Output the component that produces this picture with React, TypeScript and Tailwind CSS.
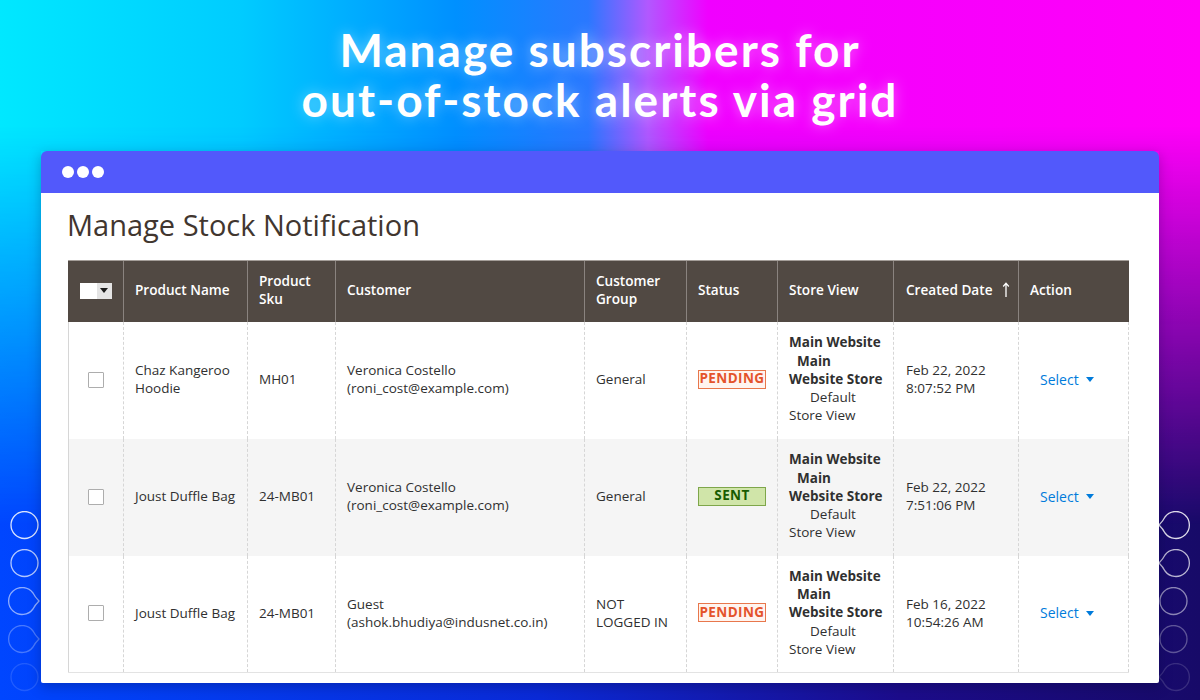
import React from "react";

const GRID =
  "grid grid-cols-[55px_124px_88px_249px_102px_91px_116px_125px_111px]";

function Circle({ op, tear }: { op: number; tear?: "left" | "right" }) {
  let path = "";
  if (tear === "right") {
    path = "M 26 6 A 13.5 13.5 0 1 0 26 22 Q 28 18 32 14 Q 28 10 26 6 Z";
  } else if (tear === "left") {
    path = "M 9 6 A 13.5 13.5 0 1 1 9 22 Q 7 18 3 14 Q 7 10 9 6 Z";
  }
  return (
    <svg width="35" height="29" viewBox="0 0 35 29" style={{ opacity: op }}>
      {tear ? (
        <path d={path} fill="none" stroke="white" strokeWidth="1.3" />
      ) : (
        <circle
          cx="17.5"
          cy="14"
          r="13.5"
          fill="none"
          stroke="white"
          strokeWidth="1.3"
        />
      )}
    </svg>
  );
}

function Badge({ kind }: { kind: "pending" | "sent" }) {
  if (kind === "pending")
    return (
      <div className="w-[70px] h-[19px] flex items-center justify-center border border-[#e8774c] bg-[#fff4ef] text-[#e4532b] font-bold text-[13.5px] tracking-[0.4px] leading-none">
        PENDING
      </div>
    );
  return (
    <div className="w-[70px] h-[19px] flex items-center justify-center border border-[#7ea64a] bg-[#d0e5a9] text-[#185b00] font-bold text-[13.5px] tracking-[0.4px] leading-none">
      SENT
    </div>
  );
}

function Select() {
  return (
    <div className="flex items-center text-[#007bdb] text-[14px]">
      <span>Select</span>
      <svg width="8" height="5" viewBox="0 0 8 5" className="ml-[7px] shrink-0">
        <path d="M0 0 H8 L4 5 Z" fill="#007bdb" />
      </svg>
    </div>
  );
}

type Row = {
  name: string[];
  sku: string;
  cust: string[];
  group: string[];
  status: "pending" | "sent";
  date: string[];
};

const rows: Row[] = [
  {
    name: ["Chaz Kangeroo", "Hoodie"],
    sku: "MH01",
    cust: ["Veronica Costello", "(roni_cost@example.com)"],
    group: ["General"],
    status: "pending",
    date: ["Feb 22, 2022", "8:07:52 PM"],
  },
  {
    name: ["Joust Duffle Bag"],
    sku: "24-MB01",
    cust: ["Veronica Costello", "(roni_cost@example.com)"],
    group: ["General"],
    status: "sent",
    date: ["Feb 22, 2022", "7:51:06 PM"],
  },
  {
    name: ["Joust Duffle Bag"],
    sku: "24-MB01",
    cust: ["Guest", "(ashok.bhudiya@indusnet.co.in)"],
    group: ["NOT", "LOGGED IN"],
    status: "pending",
    date: ["Feb 16, 2022", "10:54:26 AM"],
  },
];

const cell =
  "flex items-center px-[11px] pb-[3px] border-l border-dashed border-[#d6d6d6]";

function Lines({ lines }: { lines: string[] }) {
  return (
    <div className="flex flex-col whitespace-nowrap">
      {lines.map((l, i) => (
        <span key={i}>{l}</span>
      ))}
    </div>
  );
}

function StoreView() {
  return (
    <div className="flex flex-col whitespace-nowrap leading-[18.3px]">
      <span className="font-bold">Main Website</span>
      <span className="font-bold pl-[8px]">Main</span>
      <span className="font-bold">Website Store</span>
      <span className="pl-[21px]">Default</span>
      <span>Store View</span>
    </div>
  );
}

export default function App() {
  const hcell =
    "flex items-center px-[11px] pb-[4px] border-l border-[#8a837f] text-white font-semibold text-[13.6px] leading-[18px] whitespace-nowrap";
  return (
    <div className="relative w-[1200px] h-[700px] overflow-hidden font-['Open_Sans',sans-serif]">
      {/* background */}
      <div className="absolute inset-0 bg-[linear-gradient(to_right,#0046ff_0%,#0a2ad8_45%,#1c0c8c_75%,#170a68_100%)]" />
      <div className="absolute inset-0 bg-[linear-gradient(to_right,#00e8ff_0%,#00ccff_20%,#0090ff_38%,#2a78ff_49%,#b258ff_54%,#f000ff_59%,#ff00f8_100%)] [mask-image:linear-gradient(to_bottom,black_0%,black_18%,transparent_75%)]" />

      {/* decorative circles */}
      <div className="absolute left-[7px] top-[511px] flex flex-col gap-[9px]">
        <Circle op={0.85} />
        <Circle op={0.7} />
        <Circle op={0.55} tear="right" />
        <Circle op={0.28} tear="right" />
        <Circle op={0.12} />
      </div>
      <div className="absolute left-[1156px] top-[511px] flex flex-col gap-[9px]">
        <Circle op={0.85} tear="left" />
        <Circle op={0.7} tear="left" />
        <Circle op={0.5} />
        <Circle op={0.3} />
        <Circle op={0.14} tear="left" />
      </div>

      <div className="relative flex flex-col">
        {/* Title */}
        <div className="pt-[25px] text-center text-white font-['Lato',sans-serif] font-bold text-[46px] leading-[50px] tracking-[2px] [text-shadow:0_0_14px_rgba(255,255,255,0.45)]">
          <div>Manage subscribers for</div>
          <div>out-of-stock alerts via grid</div>
        </div>

        {/* Window */}
        <div className="ml-[41px] mt-[26px] w-[1118px] flex flex-col shadow-[0_4px_12px_rgba(0,0,40,0.25)]">
          <div className="h-[42px] bg-[#5259fb] rounded-t-[6px] flex items-center pl-[21px] gap-[3px]">
            <div className="w-[12px] h-[12px] rounded-full bg-white" />
            <div className="w-[12px] h-[12px] rounded-full bg-white" />
            <div className="w-[12px] h-[12px] rounded-full bg-white" />
          </div>
          <div className="bg-white pt-[14px] pb-[10px] pl-[27px] pr-[30px] rounded-b-[2px]">
            <div className="text-[29px] leading-[36px] text-[#41362f] -ml-[1px]">
              Manage Stock Notification
            </div>
            <div className="mt-[17px] w-[1061px] text-[#303030] text-[13.5px] leading-[18px]">
              {/* header */}
              <div
                className={`${GRID} h-[62px] bg-[#514943] border-t border-[#a49e99]`}
              >
                <div className="flex items-center justify-center pb-[2px]">
                  <div className="flex h-[16px]">
                    <div className="w-[17px] h-[16px] bg-white" />
                    <div className="w-[15px] h-[16px] bg-[#e4e4e4] flex items-center justify-center">
                      <svg width="8" height="5" viewBox="0 0 8 5">
                        <path d="M0 0 H8 L4 5 Z" fill="#1a1a1a" />
                      </svg>
                    </div>
                  </div>
                </div>
                <div className={hcell}>Product Name</div>
                <div className={hcell}>
                  <div>
                    Product
                    <br />
                    Sku
                  </div>
                </div>
                <div className={hcell}>Customer</div>
                <div className={hcell}>
                  <div>
                    Customer
                    <br />
                    Group
                  </div>
                </div>
                <div className={hcell}>Status</div>
                <div className={hcell}>Store View</div>
                <div className={`${hcell} pl-[12px] pr-0`}>
                  <span>Created Date</span>
                  <svg
                    width="8"
                    height="16"
                    viewBox="0 0 8 16"
                    className="ml-[10px] shrink-0"
                  >
                    <path
                      d="M4 15 V1.5 M1.2 4.5 L4 1.2 L6.8 4.5"
                      fill="none"
                      stroke="white"
                      strokeWidth="1.3"
                    />
                  </svg>
                </div>
                <div className={hcell}>Action</div>
              </div>
              {/* rows */}
              {rows.map((r, i) => (
                <div
                  key={i}
                  className={`${GRID} h-[117px] ${
                    i === 1 ? "bg-[#f5f5f5]" : "bg-white"
                  } ${i === 2 ? "border-b border-[#e3e3e3]" : ""}`}
                >
                  <div className="flex items-center justify-center pb-[2px] border-l border-[#d6d6d6]">
                    <div className="w-[16px] h-[16px] border border-[#adadad] bg-white rounded-[1px]" />
                  </div>
                  <div className={cell}>
                    <Lines lines={r.name} />
                  </div>
                  <div className={cell}>{r.sku}</div>
                  <div className={cell}>
                    <Lines lines={r.cust} />
                  </div>
                  <div className={cell}>
                    <Lines lines={r.group} />
                  </div>
                  <div className={cell}>
                    <Badge kind={r.status} />
                  </div>
                  <div className={cell}>
                    <StoreView />
                  </div>
                  <div className={`${cell} px-[12px]`}>
                    <Lines lines={r.date} />
                  </div>
                  <div className="flex items-center pl-[21px] pb-[2px] border-l border-dashed border-[#d6d6d6] border-r border-r-[#d6d6d6]">
                    <Select />
                  </div>
                </div>
              ))}
            </div>
          </div>
        </div>
      </div>
    </div>
  );
}
